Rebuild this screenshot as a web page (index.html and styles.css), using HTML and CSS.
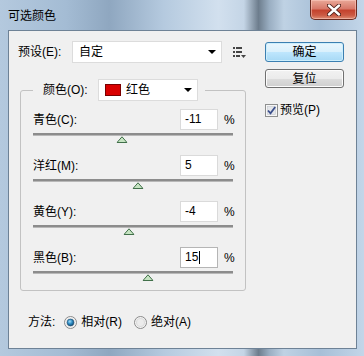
FILE: index.html
```html
<!DOCTYPE html>
<html lang="zh-CN">
<head>
    <meta charset="UTF-8">
    <title>可选颜色</title>
    <link rel="stylesheet" href="styles.css">
</head>
<body>
    <div class="window">
        <div class="titlebar">
            <span class="title">可选颜色</span>
            <button class="close">
                <svg width="14" height="12" viewBox="0 0 14 12">
                    <path d="M2 1.5 L12 10.5 M12 1.5 L2 10.5" stroke="#4a1d16" stroke-width="4.2" stroke-linecap="round"/>
                    <path d="M2 1.5 L12 10.5 M12 1.5 L2 10.5" stroke="#fff" stroke-width="2.4" stroke-linecap="round"/>
                </svg>
            </button>
        </div>

        <div class="client">
            <div class="main">
                <div class="preset-row">
                    <span class="preset-label">预设(E):</span>
                    <div class="select preset-select">
                        <span>自定</span>
                        <span class="arrow"></span>
                    </div>
                    <svg class="menu-icon" width="13" height="12" viewBox="0 0 13 12">
                        <rect x="0" y="0" width="2" height="2" fill="#444"/>
                        <rect x="3" y="0" width="6" height="2" fill="#444"/>
                        <rect x="0" y="4" width="2" height="2" fill="#444"/>
                        <rect x="3" y="4" width="6" height="2" fill="#444"/>
                        <rect x="0" y="8" width="2" height="2" fill="#444"/>
                        <rect x="3" y="8" width="4" height="2" fill="#444"/>
                        <path d="M8 8 H13 L10.5 11 Z" fill="#444"/>
                    </svg>
                </div>

                <fieldset class="group">
                    <legend>
                        <span class="legend-label">颜色(O):</span>
                        <div class="select color-select">
                            <span class="swatch"></span>
                            <span class="color-name">红色</span>
                            <span class="arrow"></span>
                        </div>
                    </legend>

                    <div class="row">
                        <div class="row-head">
                            <span class="row-label">青色(C):</span>
                            <span class="num">-11</span>
                            <span class="pct">%</span>
                        </div>
                        <div class="slider">
                            <div class="track"></div>
                            <svg class="thumb" style="left: 44.5%" width="11" height="7" viewBox="0 0 11 7"><path d="M0.5 6.5 L5.5 0.8 L10.5 6.5 Z" fill="#c6e4c2" stroke="#41704a"/></svg>
                        </div>
                    </div>

                    <div class="row">
                        <div class="row-head">
                            <span class="row-label">洋红(M):</span>
                            <span class="num">5</span>
                            <span class="pct">%</span>
                        </div>
                        <div class="slider">
                            <div class="track"></div>
                            <svg class="thumb" style="left: 52.5%" width="11" height="7" viewBox="0 0 11 7"><path d="M0.5 6.5 L5.5 0.8 L10.5 6.5 Z" fill="#c6e4c2" stroke="#41704a"/></svg>
                        </div>
                    </div>

                    <div class="row">
                        <div class="row-head">
                            <span class="row-label">黄色(Y):</span>
                            <span class="num">-4</span>
                            <span class="pct">%</span>
                        </div>
                        <div class="slider">
                            <div class="track"></div>
                            <svg class="thumb" style="left: 48%" width="11" height="7" viewBox="0 0 11 7"><path d="M0.5 6.5 L5.5 0.8 L10.5 6.5 Z" fill="#c6e4c2" stroke="#41704a"/></svg>
                        </div>
                    </div>

                    <div class="row">
                        <div class="row-head">
                            <span class="row-label">黑色(B):</span>
                            <span class="num focused">15<span class="caret"></span></span>
                            <span class="pct">%</span>
                        </div>
                        <div class="slider">
                            <div class="track"></div>
                            <svg class="thumb" style="left: 57.5%" width="11" height="7" viewBox="0 0 11 7"><path d="M0.5 6.5 L5.5 0.8 L10.5 6.5 Z" fill="#c6e4c2" stroke="#41704a"/></svg>
                        </div>
                    </div>
                </fieldset>

                <div class="method-row">
                    <span>方法:</span>
                    <svg class="radio first" width="13" height="13" viewBox="0 0 13 13">
                        <defs>
                            <radialGradient id="dot" cx="0.4" cy="0.35" r="0.7">
                                <stop offset="0" stop-color="#a6dcf7"/>
                                <stop offset="0.5" stop-color="#2c8cc4"/>
                                <stop offset="1" stop-color="#10476e"/>
                            </radialGradient>
                        </defs>
                        <circle cx="6.5" cy="6.5" r="6" fill="#f4f4f4" stroke="#8a8a8a"/>
                        <circle cx="6.5" cy="6.5" r="4.6" fill="#e2e2e2"/>
                        <circle cx="6.5" cy="6.5" r="3.4" fill="url(#dot)" stroke="#1b4e74" stroke-width="0.6"/>
                    </svg>
                    <span class="radio-label">相对(R)</span>
                    <svg class="radio second" width="13" height="13" viewBox="0 0 13 13">
                        <circle cx="6.5" cy="6.5" r="6" fill="#f4f4f4" stroke="#8a8a8a"/>
                        <circle cx="6.5" cy="6.5" r="4.6" fill="#dcdcdc"/>
                        <circle cx="6.5" cy="6.5" r="3.4" fill="#ececec"/>
                    </svg>
                    <span class="radio-label">绝对(A)</span>
                </div>
            </div>

            <div class="side">
                <button class="btn btn-ok">确定</button>
                <button class="btn btn-reset">复位</button>
                <div class="check-row">
                    <svg width="13" height="13" viewBox="0 0 13 13">
                        <rect x="0.5" y="0.5" width="12" height="12" fill="#f6f6f6" stroke="#8e8f8f"/>
                        <rect x="2.5" y="2.5" width="8" height="8" fill="#e4e6ea" stroke="#c4c8cf" stroke-width="0.6"/>
                        <path d="M3 6.5 L5.5 9.3 L10.2 3" fill="none" stroke="#3b4f8c" stroke-width="1.8"/>
                    </svg>
                    <span>预览(P)</span>
                </div>
            </div>
        </div>
    </div>
</body>
</html>
```

FILE: styles.css
```css
* {
    box-sizing: border-box;
}

body {
    margin: 0;
    font-family: "Liberation Sans", "Noto Sans CJK SC", sans-serif;
    font-size: 12px;
    line-height: 14px;
    color: #000;
}

.window {
    width: 364px;
    height: 356px;
    padding: 0 7px 7px 8px;
    display: flex;
    flex-direction: column;
    background: linear-gradient(90deg, #b4c9de 0%, #a4bcd4 18%, #8fa7c0 30%, #b5cadf 45%, #d2e0ee 60%, #c4d5e6 67%, #6d7d8d 71%, #9aaec2 74%, #bfd2e4 78%, #a7bfd7 88%, #c3d6e9 100%);
}

.titlebar {
    height: 30px;
    display: flex;
    justify-content: space-between;
    align-items: flex-start;
}

.title {
    padding-top: 9px;
    font-size: 12px;
}

.close {
    width: 47px;
    height: 20px;
    padding: 0;
    border: 1px solid #6a2b21;
    border-top: none;
    border-radius: 0 0 5px 5px;
    background: linear-gradient(#e9a898 0%, #d8796a 45%, #c4432e 55%, #cc5a43 80%, #dd8e75 100%);
    box-shadow: inset 0 0 0 1px rgba(255, 210, 200, 0.5);
    display: flex;
    align-items: center;
    justify-content: center;
}

.client {
    flex: 1;
    display: flex;
    background: #f0f0f0;
    border: 1px solid #6e8296;
}

.main {
    width: 256px;
    padding: 10px 0 0 9px;
}

.preset-row {
    display: flex;
    align-items: center;
    height: 22px;
}

.preset-label {
    width: 54px;
}

.select {
    height: 22px;
    background: #fff;
    border: 1px solid #dcdcdc;
    display: flex;
    align-items: center;
}

.preset-select {
    width: 150px;
    padding: 0 5px 0 6px;
    justify-content: space-between;
}

.arrow {
    width: 0;
    height: 0;
    border-left: 4px solid transparent;
    border-right: 4px solid transparent;
    border-top: 4px solid #000;
}

.menu-icon {
    margin-left: 11px;
    margin-top: 2px;
}

.group {
    margin: 16px 0 0 2px;
    width: 226px;
    min-width: 0;
    padding: 8px 12px 10px 12px;
    border: 1px solid #c2c2c2;
    border-radius: 3px;
}

.group legend {
    padding: 0 7px 0 10px;
    display: flex;
    align-items: center;
    height: 22px;
}

.legend-label {
    width: 55px;
}

.color-select {
    width: 100px;
    padding: 0 5px 0 6px;
}

.swatch {
    width: 16px;
    height: 12px;
    background: #d90000;
    border: 1px solid #7a0000;
}

.color-name {
    flex: 1;
    margin-left: 5px;
}

.row {
    margin-bottom: 13px;
}

.row:last-child {
    margin-bottom: 0;
}

.row-head {
    display: flex;
    align-items: center;
    height: 21px;
}

.row-label {
    flex: 1;
}

.num {
    width: 38px;
    height: 21px;
    background: #fff;
    border: 1px solid #dadada;
    padding-left: 4px;
    line-height: 19px;
    display: flex;
    align-items: center;
}

.num.focused {
    border-color: #b5b5b5;
}

.caret {
    width: 1px;
    height: 13px;
    background: #000;
    margin-left: 1px;
}

.pct {
    width: 9px;
    margin-left: 6px;
}

.slider {
    position: relative;
    height: 9px;
    margin-top: 3px;
}

.track {
    height: 2px;
    background: #8c8c8c;
    border-bottom: 1px solid #b8b8b8;
    height: 3px;
}

.thumb {
    position: absolute;
    top: 3px;
    transform: translateX(-50%);
}

.method-row {
    display: flex;
    align-items: center;
    height: 18px;
    margin-top: 22px;
    padding-left: 10px;
}

.radio.first {
    margin-left: 9px;
}

.radio.second {
    margin-left: 12px;
}

.radio-label {
    margin-left: 4px;
}

.side {
    width: 79px;
    padding-top: 11px;
}

.btn {
    display: block;
    width: 79px;
    padding: 0;
    font: inherit;
    color: #000;
    border-radius: 3px;
}

.btn-ok {
    height: 20px;
    border: 1px solid #3c7fb1;
    background: linear-gradient(#eaf6fd 0%, #d9f0fc 50%, #bee6fd 51%, #a7d9f5 100%);
    box-shadow: inset 0 0 0 1px #cdeefc;
}

.btn-reset {
    height: 19px;
    margin-top: 7px;
    border: 1px solid #707070;
    background: linear-gradient(#f2f2f2 0%, #ebebeb 50%, #dddddd 51%, #cfcfcf 100%);
    box-shadow: inset 0 0 0 1px #fcfcfc;
}

.check-row {
    display: flex;
    align-items: center;
    gap: 2px;
    margin-top: 15px;
}
```
